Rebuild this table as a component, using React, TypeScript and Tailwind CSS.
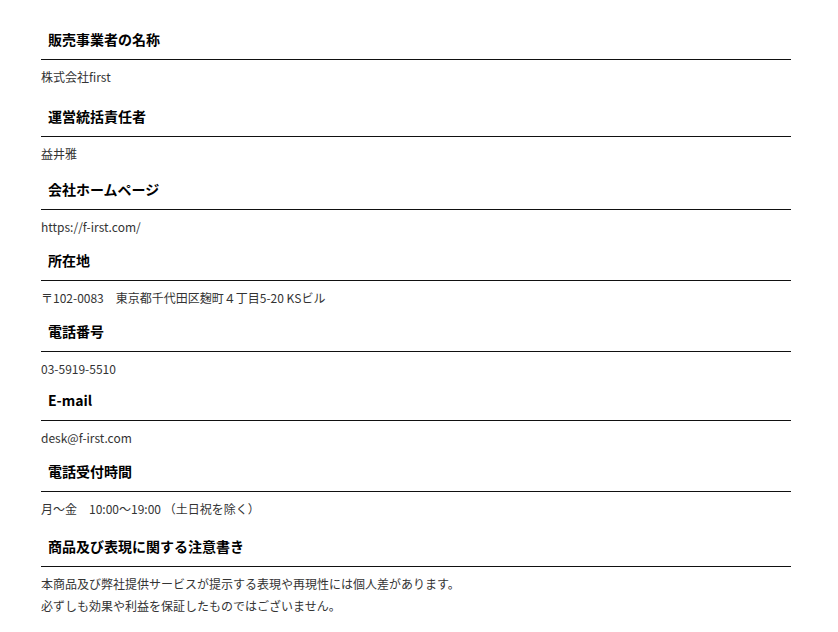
/*
 * 特定商取引法に基づく表記 — a plain list of headed rows.
 * Row spacing differs a little per block in the source page, so each
 * heading carries its own top margin.
 */

const items = [
  { title: "販売事業者の名称", mt: "mt-[29px]", body: ["株式会社first"] },
  { title: "運営統括責任者", mt: "mt-[19px]", body: ["益井雅"] },
  { title: "会社ホームページ", mt: "mt-[15px]", body: ["https://f-irst.com/"] },
  { title: "所在地", mt: "mt-[13px]", body: ["〒102-0083　東京都千代田区麹町４丁目5-20 KSビル"] },
  { title: "電話番号", mt: "mt-[13px]", body: ["03-5919-5510"] },
  { title: "E-mail", mt: "mt-[11px]", body: ["desk@f-irst.com"] },
  { title: "電話受付時間", mt: "mt-[13px]", body: ["月～金　10:00～19:00 （土日祝を除く）"] },
  {
    title: "商品及び表現に関する注意書き",
    mt: "mt-[17px]",
    body: [
      "本商品及び弊社提供サービスが提示する表現や再現性には個人差があります。",
      "必ずしも効果や利益を保証したものではございません。",
    ],
  },
];

export default function App() {
  return (
    <div
      className="min-h-[632px] w-[838px] bg-white"
      style={{ fontFamily: '"Noto Sans CJK JP", "Noto Sans", sans-serif' }}
    >
      <div className="w-[750px] pl-[41px] box-content">
        {items.map((item) => (
          <section key={item.title}>
            <h3
              className={`${item.mt} border-b border-[#111] pb-[10px] pl-[7px] text-[14px] leading-[20px] font-bold text-black`}
            >
              {item.title}
            </h3>
            <div className="mt-[7px] text-[12px] leading-[20px] text-[#333]">
              {item.body.map((line) => (
                <p key={line} className="mb-[2px] last:mb-0">
                  {line}
                </p>
              ))}
            </div>
          </section>
        ))}
      </div>
    </div>
  );
}
